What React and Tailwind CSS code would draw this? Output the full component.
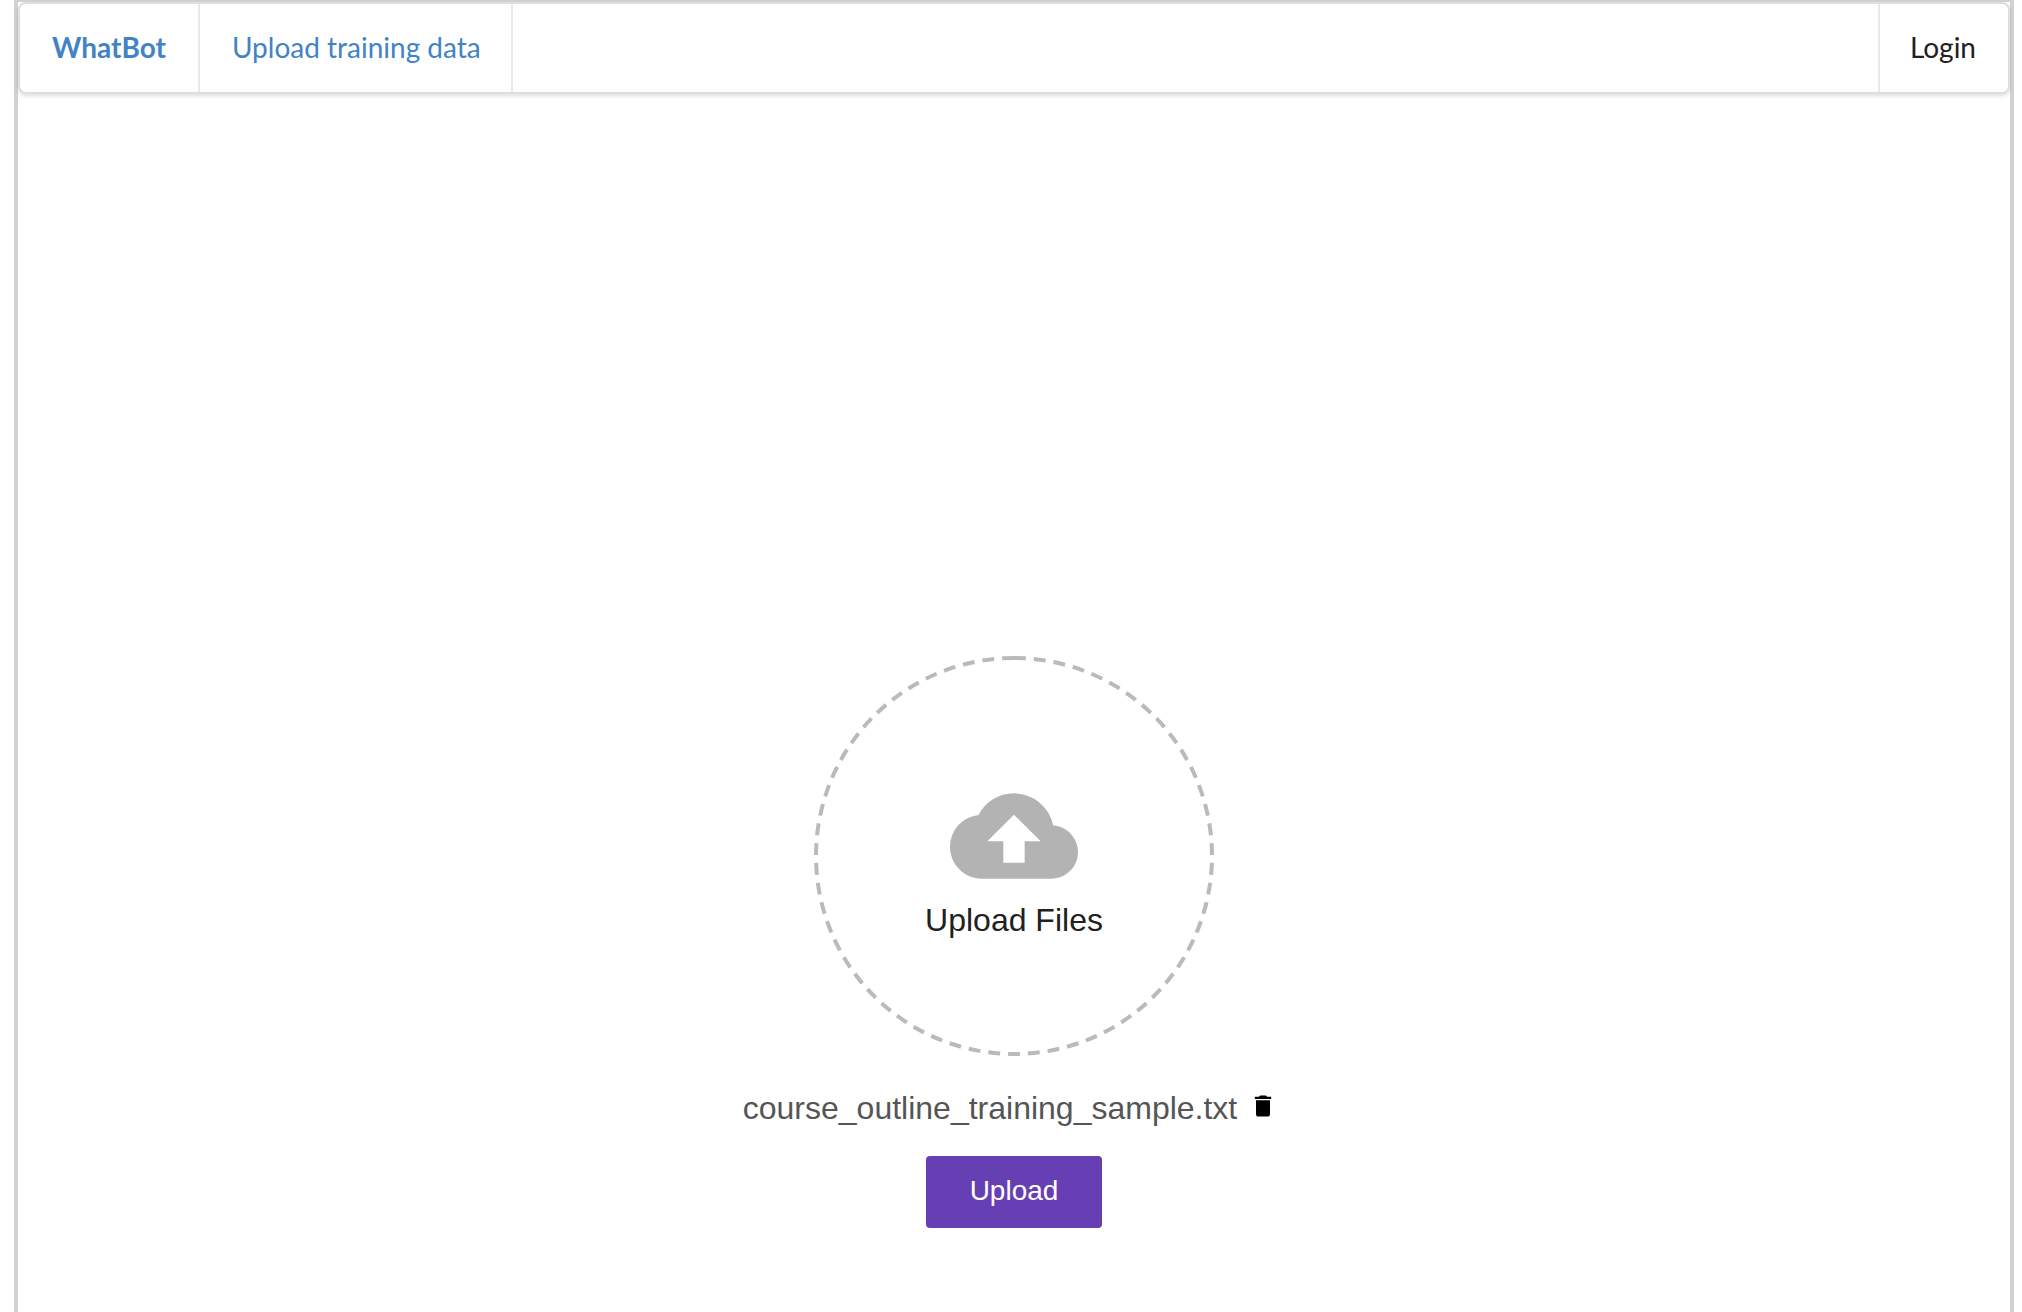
import { MdCloudUpload, MdDelete } from "react-icons/md";

function NavBar() {
  return (
    <nav className="flex h-23 items-stretch rounded-lg border-2 border-[#dededf] bg-white text-[28px] leading-8 shadow-[0_2px_4px_0_rgba(34,36,38,0.15)] font-['Lato',sans-serif]">
      <a href="#home" className="flex items-center border-r-2 border-[#e8e9e9] px-8 pb-0.5 font-bold text-[#4183c4]">
        WhatBot
      </a>
      <a href="#training" className="flex items-center border-r-2 border-[#e8e9e9] pr-[30px] pb-0.5 pl-8 text-[#4183c4]">
        Upload training data
      </a>
      <a href="#login" className="ml-auto flex items-center border-l-2 border-[#e8e9e9] pr-8 pb-0.5 pl-[30px] text-[#212121]">
        Login
      </a>
    </nav>
  );
}

function DropZone() {
  return (
    <label className="relative flex size-100 cursor-pointer flex-col items-center rounded-full pt-29">
      <svg viewBox="0 0 400 400" className="absolute inset-0 size-full" fill="none" aria-hidden="true">
        <circle
          cx="200"
          cy="200"
          r="198"
          stroke="#bababa"
          strokeWidth="4"
          pathLength="1252"
          strokeDasharray="12 8"
          transform="rotate(-90 200 200)"
        />
      </svg>
      <input type="file" className="sr-only" />
      <MdCloudUpload className="size-32 text-[#b3b3b3]" aria-hidden="true" />
      <span className="text-[32px] leading-10 text-[#212121]">Upload Files</span>
    </label>
  );
}

export default function App() {
  return (
    <div className="min-h-screen bg-white pl-3.5 pr-2">
      <div className="flex min-h-screen flex-col border-4 border-t-2 border-b-0 border-[#d2d2d2] font-['Liberation_Sans',sans-serif]">
        <NavBar />
        <main className="flex flex-col items-center pt-[562px] pb-20">
          <DropZone />
          <div className="mt-8 flex items-start gap-3 pr-2 text-[32px] leading-10 text-[#555555]">
            <span>course_outline_training_sample.txt</span>
            <button type="button" aria-label="Remove file" className="mt-1 text-black">
              <MdDelete className="size-7" />
            </button>
          </div>
          <button
            type="button"
            className="mt-7 h-18 w-44 rounded bg-[#673fb4] pb-0.5 text-[28px] leading-8 text-white"
          >
            Upload
          </button>
        </main>
      </div>
    </div>
  );
}
